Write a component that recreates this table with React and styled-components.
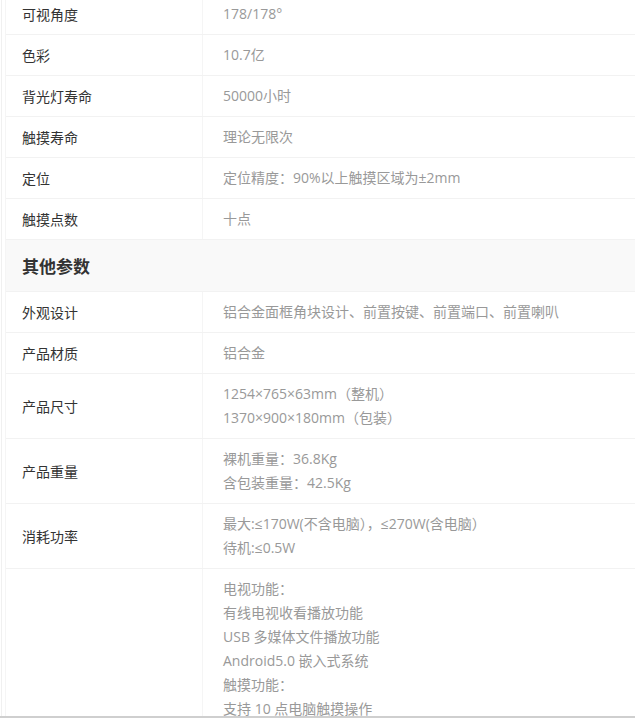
import React from "react";
import styled, { createGlobalStyle } from "styled-components";

const GlobalStyle = createGlobalStyle`
  html, body {
    margin: 0;
    padding: 0;
    background: #fff;
    overflow: hidden;
  }
  body {
    font-family: "Open Sans", "Noto Sans CJK SC", sans-serif;
  }
`;

const Frame = styled.div`
  margin-left: 1px;
  margin-top: -6px;
  padding-left: 3px;
  border-left: 1px solid #f0f0f0;
`;

const Table = styled.div`
  border-left: 1px solid #f5f5f5;
`;

const Row = styled.div`
  display: flex;
  border-bottom: 1px solid #f2f2f2;
`;

const Label = styled.div`
  width: 180px;
  flex: none;
  display: flex;
  align-items: center;
  padding-left: 16px;
  border-right: 1px solid #f5f5f5;
  font-size: 14px;
  color: #333;
`;

const Value = styled.div`
  flex: 1;
  padding: 8px 0 8px 20px;
  font-size: 14px;
  line-height: 24px;
  color: #999;
`;

const Line = styled.div`
  white-space: nowrap;
`;

const Section = styled.div`
  height: 51px;
  display: flex;
  align-items: center;
  padding-left: 16px;
  background: #f9f9f9;
  border-bottom: 1px solid #f2f2f2;
  font-size: 17px;
  font-weight: 700;
  color: #333;
`;

const BottomEdge = styled.div`
  position: fixed;
  left: 0;
  right: 0;
  bottom: 0;
  height: 2px;
  background: #cfcfcf;
`;

const specs = [
  ["可视角度", ["178/178°"]],
  ["色彩", ["10.7亿"]],
  ["背光灯寿命", ["50000小时"]],
  ["触摸寿命", ["理论无限次"]],
  ["定位", ["定位精度：90%以上触摸区域为±2mm"]],
  ["触摸点数", ["十点"]],
];

const other = [
  ["外观设计", ["铝合金面框角块设计、前置按键、前置端口、前置喇叭"]],
  ["产品材质", ["铝合金"]],
  ["产品尺寸", ["1254×765×63mm（整机）", "1370×900×180mm（包装）"]],
  ["产品重量", ["裸机重量：36.8Kg", "含包装重量：42.5Kg"]],
  ["消耗功率", ["最大:≤170W(不含电脑），≤270W(含电脑）", "待机:≤0.5W"]],
  [
    "",
    [
      "电视功能：",
      "有线电视收看播放功能",
      "USB 多媒体文件播放功能",
      "Android5.0 嵌入式系统",
      "触摸功能：",
      "支持 10 点电脑触摸操作",
    ],
  ],
];

const SpecRow = ({ label, lines }) => (
  <Row>
    <Label>{label}</Label>
    <Value>
      {lines.map((l) => (
        <Line key={l}>{l}</Line>
      ))}
    </Value>
  </Row>
);

const App = () => {
  return (
    <>
      <GlobalStyle />
      <Frame>
        <Table>
          {specs.map(([label, lines]) => (
            <SpecRow key={label} label={label} lines={lines} />
          ))}
          <Section>其他参数</Section>
          {other.map(([label, lines], i) => (
            <SpecRow key={i} label={label} lines={lines} />
          ))}
        </Table>
      </Frame>
      <BottomEdge />
    </>
  );
};

export default App;
